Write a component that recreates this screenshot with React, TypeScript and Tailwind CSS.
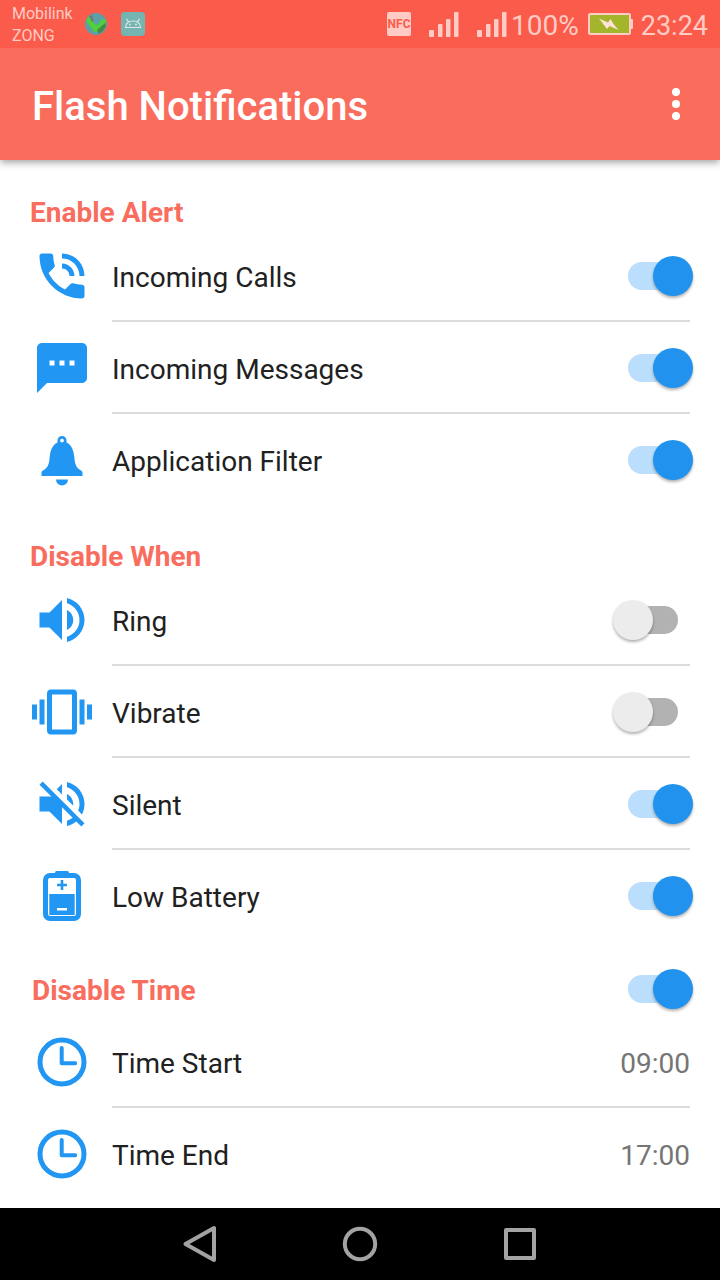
import React, { useState } from 'react'

type RowProps = {
    icon: React.ReactNode;
    label: string;
    id: string;
    divider?: boolean;
    children: React.ReactNode;
}

const MaterialIcon = ({ d }: { d: string }) => (
    <svg viewBox="0 0 24 24" className="size-15" fill="currentColor" aria-hidden="true">
        <path d={d} />
    </svg>
)

const BellIcon = () => (
    <svg viewBox="0 0 60 60" className="size-15" fill="currentColor" aria-hidden="true">
        <path fillRule="evenodd" d="M30 6c-2.6 0-4.5 2-4.5 4.5v2C20 15 18.2 21 17.6 28 17 35 15.5 38 11 40.5c-1 .6-1.5 1.2-1.5 2.3V46h41v-3.2c0-1.1-.5-1.7-1.5-2.3-4.5-2.5-6-5.5-6.6-12.5C41.8 21 40 15 34.5 12.5v-2C34.5 8 32.6 6 30 6zm0 2.7a1.9 1.9 0 1 1 0 3.8 1.9 1.9 0 0 1 0-3.8z" />
        <path d="M24 49.5h12a6 6 0 0 1-12 0z" />
    </svg>
)

const BatteryIcon = () => (
    <svg viewBox="0 0 60 60" className="size-15" fill="currentColor" aria-hidden="true">
        <rect x="13.5" y="9.5" width="33" height="43" rx="4.5" fill="none" stroke="currentColor" strokeWidth="5" />
        <rect x="23" y="5" width="14" height="5" rx="1.5" />
        <path d="M28.7 14h2.6v3.7H35v2.6h-3.7V24h-2.6v-3.7H25v-2.6h3.7z" />
        <path fillRule="evenodd" d="M17.3 28h25.4v21H17.3zM25 42v2.4h10V42z" />
    </svg>
)

const ClockIcon = () => (
    <svg viewBox="0 0 60 60" className="size-15" fill="none" stroke="currentColor" aria-hidden="true">
        <circle cx="30" cy="30" r="22" strokeWidth="5" />
        <path d="M29.7 16v15.2h13.5" strokeWidth="4" strokeLinecap="round" strokeLinejoin="round" />
    </svg>
)

const SignalIcon = () => (
    <svg viewBox="0 0 30 26" className="h-[26px] w-[30px]" fill="currentColor" aria-hidden="true">
        <rect x="0" y="19" width="5" height="7" rx="1" />
        <rect x="9" y="13" width="4.5" height="13" rx="1" />
        <rect x="17" y="8" width="4.5" height="18" rx="1" />
        <rect x="25" y="1" width="4.5" height="25" rx="1" />
    </svg>
)

const GlobeIcon = () => (
    <svg viewBox="0 0 24 24" className="size-6" aria-hidden="true">
        <circle cx="11" cy="12" r="11" fill="#5c9fa6" />
        <path d="M2 6l4-2 2 3 1 5 4 1 4-6 4 1-1 5-6 6-5 1-3-5-4-4z" fill="#4fd13c" />
        <path d="M12 18l8-7 1 3-3 5-4 3z" fill="#458a47" />
        <path d="M4 4l3-1 2 6-2 1z" fill="#74777c" />
    </svg>
)

const AndroidIcon = () => (
    <svg viewBox="0 0 24 24" className="size-6" aria-hidden="true">
        <rect x="0" y="0" width="24" height="24" rx="4" fill="#74b5b2" />
        <path d="M4.5 15.5c.3-4 3.3-6.5 7.5-6.5s7.2 2.5 7.5 6.5zM7.5 10 5.500 6.700M16.500 10l2-3.300" fill="none" stroke="#e3e9e6" strokeWidth="1.2" />
        <circle cx="9" cy="12.5" r="0.9" fill="#e3e9e6" />
        <circle cx="15" cy="12.5" r="0.9" fill="#e3e9e6" />
    </svg>
)

const ChargingIcon = () => (
    <svg viewBox="0 0 46 24" className="h-6 w-[46px]" aria-hidden="true">
        <rect x="2" y="2" width="41" height="20" rx="1" fill="#a3b52b" stroke="#ffcbc4" strokeWidth="2" />
        <rect x="43" y="7" width="3" height="10" rx="1" fill="#ffcbc4" />
        <path d="M12 6.500l9 4 2.500-3.500 3 5 5 6-9-4-2.500 3z" fill="#ffe3d8" />
    </svg>
)

const PHONE = 'M20 15.500c-1.250 0-2.450-.2-3.570-.57-.35-.11-.74-.03-1.020.24l-2.200 2.200c-2.830-1.440-5.150-3.750-6.590-6.590l2.200-2.210c.28-.26.36-.65.25-1C8.700 6.450 8.500 5.250 8.500 4c0-.55-.45-1-1-1H4c-.55 0-1 .45-1 1 0 9.390 7.610 17 17 17 .55 0 1-.45 1-1v-3.500c0-.55-.45-1-1-1zM19 12h2c0-4.970-4.030-9-9-9v2c3.870 0 7 3.130 7 7zm-4 0h2c0-2.760-2.240-5-5-5v2c1.660 0 3 1.340 3 3z'
const MESSAGE = 'M20 2H4c-1.100 0-1.990.9-1.990 2L2 22l4-4h14c1.100 0 2-.9 2-2V4c0-1.100-.9-2-2-2zM9 11H7V9h2v2zm4 0h-2V9h2v2zm4 0h-2V9h2v2z'
const VOLUME = 'M3 9v6h4l5 5V4L7 9H3zm13.500 3c0-1.770-1.020-3.290-2.500-4.030v8.050c1.480-.73 2.500-2.250 2.500-4.020zM14 3.230v2.060c2.890.86 5 3.540 5 6.710s-2.110 5.850-5 6.710v2.060c4.010-.91 7-4.490 7-8.770s-2.990-7.860-7-8.770z'
const VIBRATE = 'M0 15h2V9H0v6zm3 2h2V7H3v10zm19-8v6h2V9h-2zm-3 8h2V7h-2v10zM16.500 3h-9C6.670 3 6 3.670 6 4.500v15c0 .83.67 1.500 1.500 1.500h9c.83 0 1.500-.67 1.500-1.500v-15c0-.83-.67-1.500-1.500-1.500zM16 19H8V5h8v14z'
const MUTED = 'M16.500 12c0-1.770-1.020-3.290-2.500-4.030v2.210l2.450 2.450c.03-.2.05-.41.05-.63zm2.500 0c0 .94-.2 1.820-.54 2.640l1.510 1.510C20.630 14.910 21 13.500 21 12c0-4.280-2.990-7.860-7-8.770v2.060c2.890.86 5 3.540 5 6.710zM4.270 3L3 4.270 7.730 9H3v6h4l5 5v-6.730l4.250 4.250c-.67.52-1.420.93-2.250 1.180v2.060c1.380-.31 2.630-.95 3.690-1.810L19.730 21 21 19.730l-9-9L4.270 3zM12 4L9.910 6.090 12 8.180V4z'

const Toggle = ({ id, initial }: { id: string; initial: boolean }) => {
    const [on, setOn] = useState(initial);
    return (
        <input
            id={id}
            type="checkbox"
            checked={on}
            onChange={(e) => setOn(e.target.checked)}
            className="relative mr-3 h-7 w-[50px] shrink-0 cursor-pointer appearance-none rounded-full bg-[#b2b2b2] before:absolute before:-top-1.5 before:-left-[15px] before:size-10 before:rounded-full before:bg-[#ececec] before:shadow-[0_2px_3px_rgba(0,0,0,0.3)] checked:bg-[#badefb] checked:before:left-[25px] checked:before:bg-[#2193ee]"
        />
    )
}

const Row = ({ icon, label, id, divider, children }: RowProps) => (
    <div className="flex h-23 items-center gap-5 pr-[30px] pl-8">
        <div className="shrink-0 text-[#2196f3]">{icon}</div>
        <div className={`flex h-full flex-1 items-center justify-between border-b-2 pt-0.5 ${divider ? 'border-[#dcdcdc]' : 'border-transparent'}`}>
            <label htmlFor={id} className="pt-1 text-[28px] leading-8 text-[#212121]">{label}</label>
            {children}
        </div>
    </div>
)

const alerts = [
    { id: 'calls', label: 'Incoming Calls', icon: <MaterialIcon d={PHONE} />, on: true },
    { id: 'messages', label: 'Incoming Messages', icon: <MaterialIcon d={MESSAGE} />, on: true },
    { id: 'filter', label: 'Application Filter', icon: <BellIcon />, on: true },
]

const disableWhen = [
    { id: 'ring', label: 'Ring', icon: <MaterialIcon d={VOLUME} />, on: false },
    { id: 'vibrate', label: 'Vibrate', icon: <MaterialIcon d={VIBRATE} />, on: false },
    { id: 'silent', label: 'Silent', icon: <MaterialIcon d={MUTED} />, on: true },
    { id: 'battery', label: 'Low Battery', icon: <BatteryIcon />, on: true },
]

const times = [
    { id: 'start', label: 'Time Start', value: '09:00' },
    { id: 'end', label: 'Time End', value: '17:00' },
]

const ToggleSection = ({ title, items }: { title: string; items: typeof alerts }) => (
    <section className="pt-8">
        <h2 className="h-9 pl-[30px] text-[28px] leading-[38px] font-bold text-[#f96d5e]">{title}</h2>
        {items.map((item, i) => (
            <Row key={item.id} id={item.id} icon={item.icon} label={item.label} divider={i < items.length - 1}>
                <Toggle id={item.id} initial={item.on} />
            </Row>
        ))}
    </section>
)

const StatusBar = () => (
    <div className="relative z-10 flex h-12 items-center justify-between bg-[#fb5b4a] px-3 text-[#ffcbc4]">
        <div className="flex items-center gap-3">
            <div className="pt-0.5 text-base leading-[22px]">
                <div>Mobilink</div>
                <div>ZONG</div>
            </div>
            <GlobeIcon />
            <AndroidIcon />
        </div>
        <div className="flex items-center">
            <div className="mr-[18px] flex size-6 items-center justify-center rounded-xs bg-[#ffcbc4] text-xs font-bold text-[#fb5b4a]">NFC</div>
            <SignalIcon />
            <div className="ml-[18px]"><SignalIcon /></div>
            <span className="ml-1 pt-1 text-[28px] leading-8">100%</span>
            <div className="mx-2"><ChargingIcon /></div>
            <span className="pt-1 text-[27px] leading-8">23:24</span>
        </div>
    </div>
)

const NavBar = () => (
    <nav className="flex h-18 items-center justify-center bg-black text-[#a3a3a3]">
        <button type="button" aria-label="Back" className="flex w-40 justify-center">
            <svg viewBox="0 0 40 40" className="size-10" fill="none" stroke="currentColor" strokeWidth="4" strokeLinejoin="round">
                <path d="M34 4v32L5.500 20z" />
            </svg>
        </button>
        <button type="button" aria-label="Home" className="flex w-40 justify-center">
            <svg viewBox="0 0 40 40" className="size-10" fill="none" stroke="currentColor" strokeWidth="4">
                <circle cx="20" cy="20" r="15.2" />
            </svg>
        </button>
        <button type="button" aria-label="Recent apps" className="flex w-40 justify-center">
            <svg viewBox="0 0 40 40" className="size-10" fill="none" stroke="currentColor" strokeWidth="4" strokeLinejoin="round">
                <rect x="6" y="6" width="28" height="28" />
            </svg>
        </button>
    </nav>
)

const App = () => {
    return (
        <div className="flex min-h-screen flex-col bg-white font-[Roboto,sans-serif]">
            <StatusBar />
            <header className="flex h-28 items-center justify-between bg-[#fa6d5d] pr-6 pl-8 text-white shadow-[0_2px_8px_rgba(0,0,0,0.4)]">
                <h1 className="pt-1.5 text-[40px] leading-12 font-medium">Flash Notifications</h1>
                <button type="button" aria-label="More options">
                    <svg viewBox="0 0 40 40" className="size-10" fill="currentColor">
                        <circle cx="20" cy="8" r="4" />
                        <circle cx="20" cy="20" r="4" />
                        <circle cx="20" cy="32" r="4" />
                    </svg>
                </button>
            </header>
            <main className="flex-1 pt-0.5">
                <ToggleSection title="Enable Alert" items={alerts} />
                <ToggleSection title="Disable When" items={disableWhen} />
                <section className="pt-5">
                    <div className="flex h-[54px] items-center justify-between pr-[30px] pl-8">
                        <h2 className="pt-1 text-[28px] leading-9 font-bold text-[#f96d5e]">
                            <label htmlFor="disable-time">Disable Time</label>
                        </h2>
                        <Toggle id="disable-time" initial={true} />
                    </div>
                    {times.map((t, i) => (
                        <Row key={t.id} id={t.id} icon={<ClockIcon />} label={t.label} divider={i < times.length - 1}>
                            <output id={t.id} className="pt-1 text-[28px] leading-8 text-[#757575]">{t.value}</output>
                        </Row>
                    ))}
                </section>
            </main>
            <NavBar />
        </div>
    )
}

export default App
